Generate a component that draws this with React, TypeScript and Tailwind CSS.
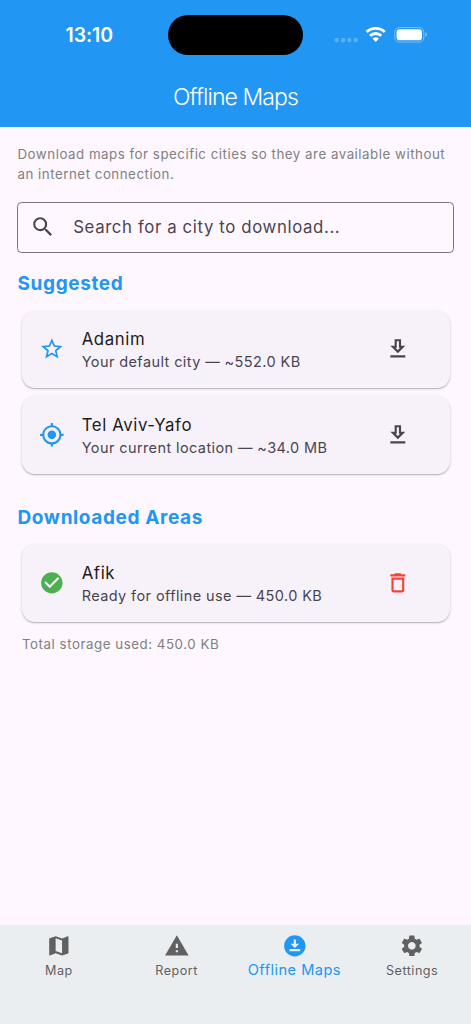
import React from 'react';
import {
  MdCheckCircle,
  MdDeleteOutline,
  MdDownloadForOffline,
  MdMap,
  MdMyLocation,
  MdOutlineDownload,
  MdSearch,
  MdSettings,
  MdStarBorder,
  MdWarning,
} from 'react-icons/md';

function App() {
  return (
    <div className="flex h-[1024px] w-[471px] flex-col overflow-hidden bg-[#fef7ff] font-['Inter','Liberation_Sans',sans-serif]">
      <header className="h-[126.5px] shrink-0 bg-[#2196f3] text-white">
        <StatusBar />
        <h1 className="mt-[13px] text-center text-[23px] leading-[30px] font-light tracking-[-0.9px]">Offline Maps</h1>
      </header>

      <main className="flex-1 px-[17px] pt-[17px]">
        <p className="pl-[0.5px] text-[13.3px] leading-[20.5px] tracking-[0.52px] whitespace-nowrap text-[#808080]">
          Download maps for specific cities so they are available without
          <br />
          an internet connection.
        </p>

        <div className="mt-[17px] flex h-[51px] items-center rounded-[4.5px] border border-[#79747e] pl-[12px] text-[#49454f]">
          <MdSearch className="size-[25.7px]" />
          <span className="mt-px ml-[17.5px] text-[16.8px] tracking-[0.62px] whitespace-nowrap">Search for a city to download...</span>
        </div>

        <SectionTitle className="mt-[17.5px]">Suggested</SectionTitle>
        <div className="mt-[13.5px] flex flex-col gap-[8px] px-[4.5px]">
          <AreaCard
            icon={<MdStarBorder className="size-[25.7px] text-[#2196f3]" />}
            title="Adanim"
            subtitle="Your default city — ~552.0 KB"
            action={<MdOutlineDownload className="size-[25.7px] text-[#49454f]" />}
          />
          <AreaCard
            icon={<MdMyLocation className="size-[25.7px] text-[#2196f3]" />}
            title="Tel Aviv-Yafo"
            subtitle="Your current location — ~34.0 MB"
            action={<MdOutlineDownload className="size-[25.7px] text-[#49454f]" />}
          />
        </div>

        <SectionTitle className="mt-[30px]">Downloaded Areas</SectionTitle>
        <div className="mt-[13.5px] px-[4.5px]">
          <AreaCard
            icon={<MdCheckCircle className="size-[25.7px] text-[#4caf50]" />}
            title="Afik"
            subtitle="Ready for offline use — 450.0 KB"
            action={<MdDeleteOutline className="size-[25.7px] text-[#f44336]" />}
          />
        </div>
        <p className="mt-[12.5px] pl-[5px] text-[13.3px] leading-[20px] tracking-[0.54px] text-[#808080]">
          Total storage used: 450.0 KB
        </p>
      </main>

      <nav className="grid h-[99px] shrink-0 grid-cols-4 bg-[#eaeef1] pt-[8px]">
        <NavItem icon={<MdMap className="size-[25.7px]" />} label="Map" />
        <NavItem icon={<MdWarning className="size-[25.7px]" />} label="Report" />
        <NavItem icon={<MdDownloadForOffline className="size-[25.7px]" />} label="Offline Maps" active />
        <NavItem icon={<MdSettings className="size-[25.7px]" />} label="Settings" />
      </nav>
    </div>
  );
}

function StatusBar() {
  return (
    <div className="flex h-[69px] items-start">
      <span className="mt-[23px] ml-[65.5px] w-[102.5px] text-[19.5px] leading-[25px] font-semibold tracking-[-0.1px]">13:10</span>
      <div className="mt-[15px] h-[39.5px] w-[134.5px] rounded-full bg-black" />
      <svg className="mt-[26px] ml-[31px]" width="95" height="18" viewBox="0 0 95 18" fill="none">
        <g fill="white" fillOpacity="0.25">
          <rect x="0.5" y="12" width="4.2" height="4.2" rx="1.4" />
          <rect x="6.9" y="12" width="4.2" height="4.2" rx="1.4" />
          <rect x="13.2" y="12" width="4.2" height="4.2" rx="1.4" />
          <rect x="19.5" y="12" width="4.2" height="4.2" rx="1.4" />
        </g>
        <g stroke="white" strokeWidth="2.9">
          <path d="M32.6 6A13.2 13.2 0 0 1 50.8 6" />
          <path d="M36.1 9.8A8.1 8.1 0 0 1 47.3 9.8" />
        </g>
        <path d="M38.5 12.6A4.8 4.8 0 0 1 44.9 12.6L41.7 15.9Z" fill="white" />
        <rect x="60.8" y="1.5" width="29" height="14.6" rx="4.6" stroke="white" strokeOpacity="0.4" />
        <rect x="62.6" y="3.3" width="25.4" height="11" rx="3.1" fill="white" />
        <path d="M91.3 6.6C93.4 7.3 93.4 10.2 91.3 10.9Z" fill="white" fillOpacity="0.5" />
      </svg>
    </div>
  );
}

function SectionTitle({ children, className }: { children: React.ReactNode; className: string }) {
  return (
    <h2 className={`${className} pl-[0.5px] text-[19px] leading-[27px] font-bold tracking-[0.62px] text-[#2196f3]`}>{children}</h2>
  );
}

function AreaCard({ icon, title, subtitle, action }: { icon: React.ReactNode; title: string; subtitle: string; action: React.ReactNode }) {
  return (
    <div className="flex h-[77.5px] items-center rounded-[13px] bg-[#f7f2fa] pr-[38.5px] pl-[17px] shadow-[0_1px_3px_rgba(0,0,0,0.15),0_1px_1px_rgba(0,0,0,0.18)]">
      {icon}
      <div className="mt-[2px] ml-[17.5px] flex-1 whitespace-nowrap">
        <h3 className="text-[16.8px] leading-[24px] tracking-[0.6px] text-[#1d1b20]">{title}</h3>
        <p className="text-[14.5px] leading-[22px] tracking-[0.4px] text-[#49454f]">{subtitle}</p>
      </div>
      {action}
    </div>
  );
}

function NavItem({ icon, label, active }: { icon: React.ReactNode; label: string; active?: boolean }) {
  return (
    <div className={`flex flex-col items-center ${active ? 'text-[#2196f3]' : 'text-[#616161]'}`}>
      {icon}
      <span
        className={
          active
            ? 'mt-px text-[14.6px] leading-[20px] tracking-[0.46px] whitespace-nowrap'
            : 'mt-[2px] text-[12.6px] leading-[20px] tracking-[0.5px] whitespace-nowrap'
        }
      >
        {label}
      </span>
    </div>
  );
}

export default App;
